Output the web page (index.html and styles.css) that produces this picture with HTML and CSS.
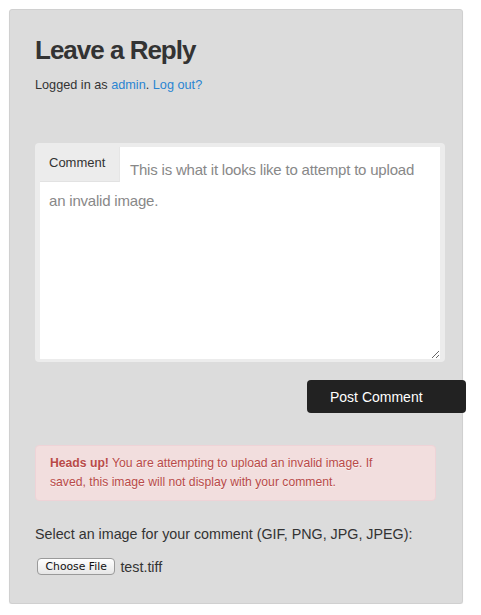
FILE: index.html
```html
<!DOCTYPE html>
<html>
<head>
<meta charset="utf-8">
<link rel="stylesheet" href="styles.css">
</head>
<body>
<div class="panel">
  <h3 class="title">Leave a Reply</h3>
  <p class="logged">Logged in as <a href="#">admin</a>. <a href="#">Log out?</a></p>
  <div class="field">
    <label class="field-label">Comment</label>
    <textarea class="field-input">This is what it looks like to attempt to upload an invalid image.</textarea>
  </div>
  <div class="actions">
    <button class="submit">Post Comment</button>
  </div>
  <div class="alert"><strong>Heads up!</strong> You are attempting to upload an invalid image. If saved, this image will not display with your comment.</div>
  <p class="select">Select an image for your comment (GIF, PNG, JPG, JPEG):</p>
  <div class="file-row">
    <span class="file-btn">Choose File</span>
    <span class="file-name">test.tiff</span>
  </div>
</div>
</body>
</html>
```
FILE: styles.css
```css
html, body {
  margin: 0;
  padding: 0;
  background: #fff;
}
body {
  font-family: "Liberation Sans", Arial, Helvetica, sans-serif;
  color: #333;
}
.panel {
  box-sizing: border-box;
  width: 454px;
  margin: 9px 0 0 9px;
  padding: 25px 17px 28px 25px;
  background: #dcdcdc;
  border: 1px solid #d0d0d0;
  border-radius: 3px;
  box-shadow: 0 1px 1px rgba(0,0,0,0.08);
}
.title {
  margin: 0;
  font-size: 26px;
  line-height: 30px;
  font-weight: bold;
  letter-spacing: -1px;
  color: #333;
}
.logged {
  margin: 11px 0 0;
  font-size: 12.7px;
  line-height: 18px;
  color: #333;
}
.logged a {
  color: #2a84d2;
  text-decoration: none;
}
.field {
  position: relative;
  margin-top: 49px;
  padding: 4px 5px 3px 5px;
  background: #ececec;
  border-radius: 4px;
}
.field-label {
  position: absolute;
  top: 4px;
  left: 5px;
  box-sizing: border-box;
  width: 80px;
  height: 35px;
  padding: 7px 0 0 9px;
  font-size: 13px;
  line-height: 18px;
  color: #333;
  background: #ececec;
  border-bottom: 1px solid #e2e2e2;
  border-right: 1px solid #e6e6e6;
}
.field-input {
  display: block;
  box-sizing: border-box;
  width: 400px;
  height: 212px;
  margin: 0;
  padding: 7px 9px 6px;
  border: none;
  outline: none;
  background: #fff;
  font-family: "Liberation Sans", Arial, sans-serif;
  font-size: 15px;
  letter-spacing: -0.2px;
  line-height: 31px;
  text-indent: 81px;
  color: #888;
  resize: both;
}
.actions {
  display: flex;
  justify-content: flex-end;
  margin: 18px -21px 0 0;
}
.submit {
  box-sizing: border-box;
  width: 159px;
  height: 33px;
  padding: 0 0 0 23px;
  text-align: left;
  border: none;
  border-radius: 4px;
  background: #222;
  color: #fff;
  font-family: "Liberation Sans", Arial, sans-serif;
  font-size: 14px;
}
.alert {
  box-sizing: border-box;
  width: 401px;
  margin-top: 32px;
  padding: 8px 35px 8px 14px;
  background: #f2dede;
  border: 1px solid #eed3d7;
  border-radius: 4px;
  color: #b94a48;
  font-size: 12.2px;
  line-height: 19px;
  text-shadow: 0 1px 0 rgba(255,255,255,0.5);
}
.select {
  margin: 23px 0 0;
  font-size: 14.3px;
  line-height: 20px;
  color: #333;
}
.file-row {
  display: flex;
  align-items: center;
  gap: 5px;
  margin-top: 14px;
  margin-left: 2px;
}
.file-btn {
  box-sizing: border-box;
  display: inline-flex;
  align-items: center;
  height: 17px;
  padding: 0 7.5px;
  border: 1px solid #9a9a9a;
  border-radius: 4px;
  background: linear-gradient(#ffffff, #e6e6e6);
  font-family: "DejaVu Sans", sans-serif;
  font-size: 10.8px;
  color: #111;
}
.file-name {
  font-size: 14.3px;
  color: #333;
}
```
